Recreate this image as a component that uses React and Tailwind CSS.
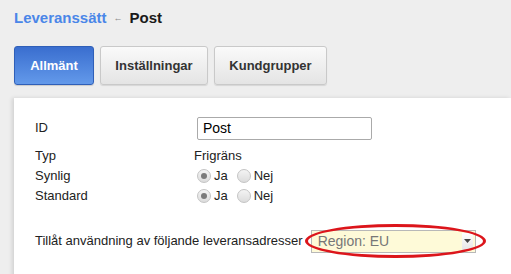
import React from 'react';

function Radio({ checked }) {
  return (
    <span className="inline-block w-[14px] h-[14px] rounded-full border border-[#c4c4c4] bg-gradient-to-b from-[#f4f4f4] to-[#dcdcdc] relative">
      {checked && (
        <span className="absolute left-[3px] top-[3px] w-[6px] h-[6px] rounded-full bg-[#7a7a7a]" />
      )}
    </span>
  );
}

function RadioPair() {
  return (
    <div className="flex items-center gap-[3px]">
      <Radio checked />
      <span className="mr-[6px]">Ja</span>
      <Radio />
      <span>Nej</span>
    </div>
  );
}

export default function App() {
  return (
    <div
      className="w-[511px] h-[274px] overflow-hidden bg-[#eeeeee] text-[13px] text-[#222]"
      style={{ fontFamily: '"Liberation Sans", Arial, sans-serif' }}
    >
      {/* Breadcrumb */}
      <div className="flex items-center h-[36px] pl-[14px] pt-[1px] font-bold text-[15px]">
        <span className="text-[#4a86e8]">Leveranssätt</span>
        <span className="text-[#888] text-[9px] mx-[7px]">&#8592;</span>
        <span className="text-[#1a1a1a]">Post</span>
      </div>

      {/* Tabs */}
      <div className="flex gap-[6px] pl-[14px] pt-[10px]">
        <button className="h-[39px] w-[80px] rounded-[3px] border border-[#2f5fb8] bg-gradient-to-b from-[#3a6ecf] to-[#6399ea] text-white font-bold text-[13px] shadow-[0_1px_1px_rgba(0,0,0,0.15)]">
          Allmänt
        </button>
        <button className="h-[39px] w-[108px] rounded-[3px] border border-[#c9c9c9] bg-gradient-to-b from-[#fafafa] to-[#e4e4e4] text-[#333] font-bold text-[13px] shadow-[0_1px_1px_rgba(0,0,0,0.1)]">
          Inställningar
        </button>
        <button className="h-[39px] w-[113px] rounded-[3px] border border-[#c9c9c9] bg-gradient-to-b from-[#fafafa] to-[#e4e4e4] text-[#333] font-bold text-[13px] shadow-[0_1px_1px_rgba(0,0,0,0.1)]">
          Kundgrupper
        </button>
      </div>

      {/* Panel */}
      <div className="ml-[14px] mt-[13px] bg-white h-[200px] shadow-[-2px_0_4px_rgba(0,0,0,0.12)] pl-[21px] pt-[19px]">
        <div className="flex items-start h-[29px]">
          <span className="w-[162px] pt-[1px]">ID</span>
          <div className="h-[23px] w-[175px] border border-[#aaa] rounded-[2px] flex items-center px-[5px] text-[14px] text-black">
            Post
          </div>
        </div>
        <div className="flex items-center h-[20px]">
          <span className="w-[159px]">Typ</span>
          <span>Frigräns</span>
        </div>
        <div className="flex items-center h-[20px]">
          <span className="w-[162px]">Synlig</span>
          <RadioPair />
        </div>
        <div className="flex items-center h-[20px]">
          <span className="w-[162px]">Standard</span>
          <RadioPair />
        </div>
        <div className="flex items-center mt-[23px] h-[24px]">
          <span className="mr-[8px]">Tillåt användning av följande leveransadresser</span>
          <div className="relative">
            <div className="h-[23px] w-[165px] border border-[#b8b8b8] bg-[#fefad8] flex items-center justify-between pl-[6px] pr-[2px] text-[14px] text-[#777]">
              <span>Region: EU</span>
              <span className="w-[11px] h-[17px] bg-gradient-to-b from-white to-[#e6e6e6] flex items-center justify-center">
                <svg width="7" height="4" viewBox="0 0 7 4">
                  <path d="M0 0h7L3.5 4z" fill="#444" />
                </svg>
              </span>
            </div>
            <div className="absolute left-[-6px] top-[-6px] w-[181px] h-[34px] rounded-[50%] border-[3px] border-[#dc151b] pointer-events-none" />
          </div>
        </div>
      </div>
    </div>
  );
}
